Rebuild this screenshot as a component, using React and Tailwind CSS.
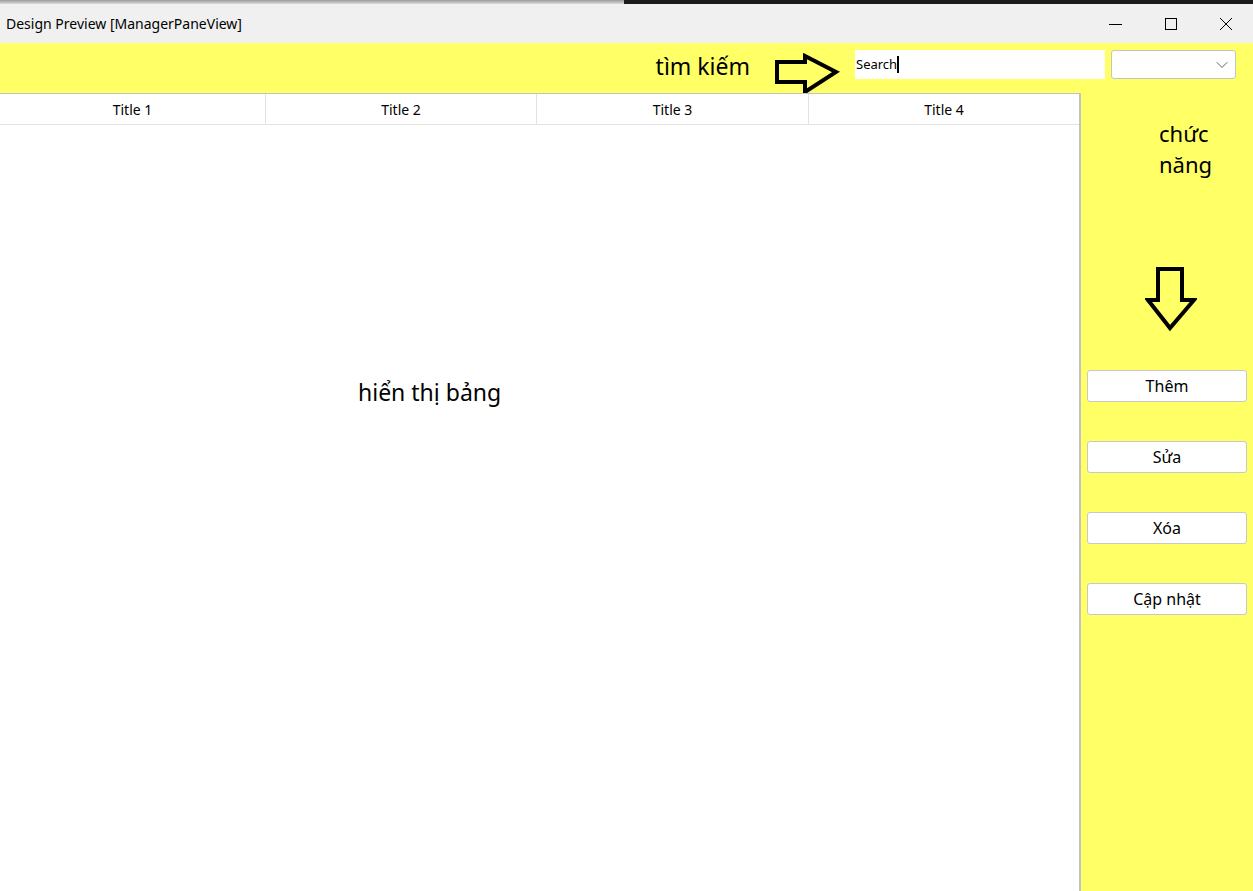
import { ChevronDown } from 'lucide-react'

const font = { fontFamily: '"Noto Sans", "Open Sans", sans-serif' }

function RightArrow() {
    return (
        <svg width="66" height="42" viewBox="0 0 66 42" className="block">
            <polygon points="3,9 31,9 31,3 62,19 31,39 31,29 3,29"
                fill="none" stroke="black" strokeWidth="4" strokeLinejoin="miter" />
        </svg>
    )
}

function DownArrow() {
    return (
        <svg width="52" height="66" viewBox="0 0 52 66" className="block">
            <polygon points="13,3 37,3 37,34 49,34 25,62 3,34 13,34"
                fill="none" stroke="black" strokeWidth="4" strokeLinejoin="miter" />
        </svg>
    )
}

function WindowButtons() {
    return (
        <div className="flex items-center h-full">
            <div className="w-[55px] flex justify-center">
                <svg width="14" height="14" viewBox="0 0 14 14"><line x1="0" y1="7.5" x2="13" y2="7.5" stroke="black" strokeWidth="1" /></svg>
            </div>
            <div className="w-[55px] flex justify-center">
                <svg width="14" height="14" viewBox="0 0 14 14"><rect x="1.5" y="1.5" width="11" height="11" fill="none" stroke="black" strokeWidth="1" /></svg>
            </div>
            <div className="w-[55px] flex justify-center">
                <svg width="14" height="14" viewBox="0 0 14 14">
                    <line x1="1" y1="1" x2="13" y2="13" stroke="black" strokeWidth="1" />
                    <line x1="13" y1="1" x2="1" y2="13" stroke="black" strokeWidth="1" />
                </svg>
            </div>
        </div>
    )
}

function SideButton({ label }) {
    return (
        <button className="w-[160px] h-[32px] bg-white border border-[#c8c8c8] rounded-[3px] text-[16px] text-black flex items-center justify-center">
            {label}
        </button>
    )
}

export default function App() {
    const titles = ['Title 1', 'Title 2', 'Title 3', 'Title 4']

    return (
        <div className="w-[1253px] h-[891px] flex flex-col overflow-hidden bg-[#ffff66]" style={font}>
            <div className="h-[4px] flex shrink-0">
                <div className="w-[624px] bg-gradient-to-b from-[#9a9a9a] to-[#dcdcdc]" />
                <div className="flex-1 bg-[#1b1b1b]" />
            </div>

            <div className="h-[39px] shrink-0 bg-[#f0f0f0] flex items-center justify-between">
                <span className="pl-[6px] text-[14px] text-black">Design Preview [ManagerPaneView]</span>
                <WindowButtons />
            </div>

            <div className="h-[50px] shrink-0 flex justify-end items-start pr-[17px]">
                <span className="mt-[8px] text-[23px] text-black leading-[30px]">tìm kiếm</span>
                <div className="ml-[24px] mt-[10px]"><RightArrow /></div>
                <div className="ml-[15px] mt-[7px] w-[250px] h-[29px] bg-white flex items-center pl-[1px]">
                    <span className="text-[13px] text-black">Search</span>
                    <span className="w-[2px] h-[17px] bg-black" />
                </div>
                <div className="ml-[6px] mt-[7px] w-[125px] h-[29px] bg-white border border-[#c4c4c4] rounded-[3px] flex items-center justify-end pr-[3px]">
                    <ChevronDown size={20} strokeWidth={1.1} className="text-[#555]" />
                </div>
            </div>

            <div className="flex-1 flex min-h-0">
                <div className="w-[1081px] bg-white border-t border-r-2 border-[#c2c2c2] flex flex-col">
                    <div className="grid grid-cols-[266px_271px_272px_270px] h-[31px] border-b border-[#e2e2e2]">
                        {titles.map((t, i) => (
                            <div key={t} className={`flex items-center justify-center text-[14px] text-black ${i < 3 ? 'border-r border-[#e2e2e2]' : ''}`}>
                                {t}
                            </div>
                        ))}
                    </div>
                    <div className="pt-[250px] pl-[358px]">
                        <span className="text-[23px] text-black">hiển thị bảng</span>
                    </div>
                </div>

                <div className="flex-1 flex flex-col">
                    <div className="pl-[78px] pt-[25px] text-[22px] leading-[31px] text-black">
                        <div>chức</div>
                        <div>năng</div>
                    </div>
                    <div className="pl-[64px] mt-[86px]"><DownArrow /></div>
                    <div className="pl-[6px] mt-[38px] flex flex-col gap-[39px]">
                        <SideButton label="Thêm" />
                        <SideButton label="Sửa" />
                        <SideButton label="Xóa" />
                        <SideButton label="Cập nhật" />
                    </div>
                </div>
            </div>
        </div>
    )
}
